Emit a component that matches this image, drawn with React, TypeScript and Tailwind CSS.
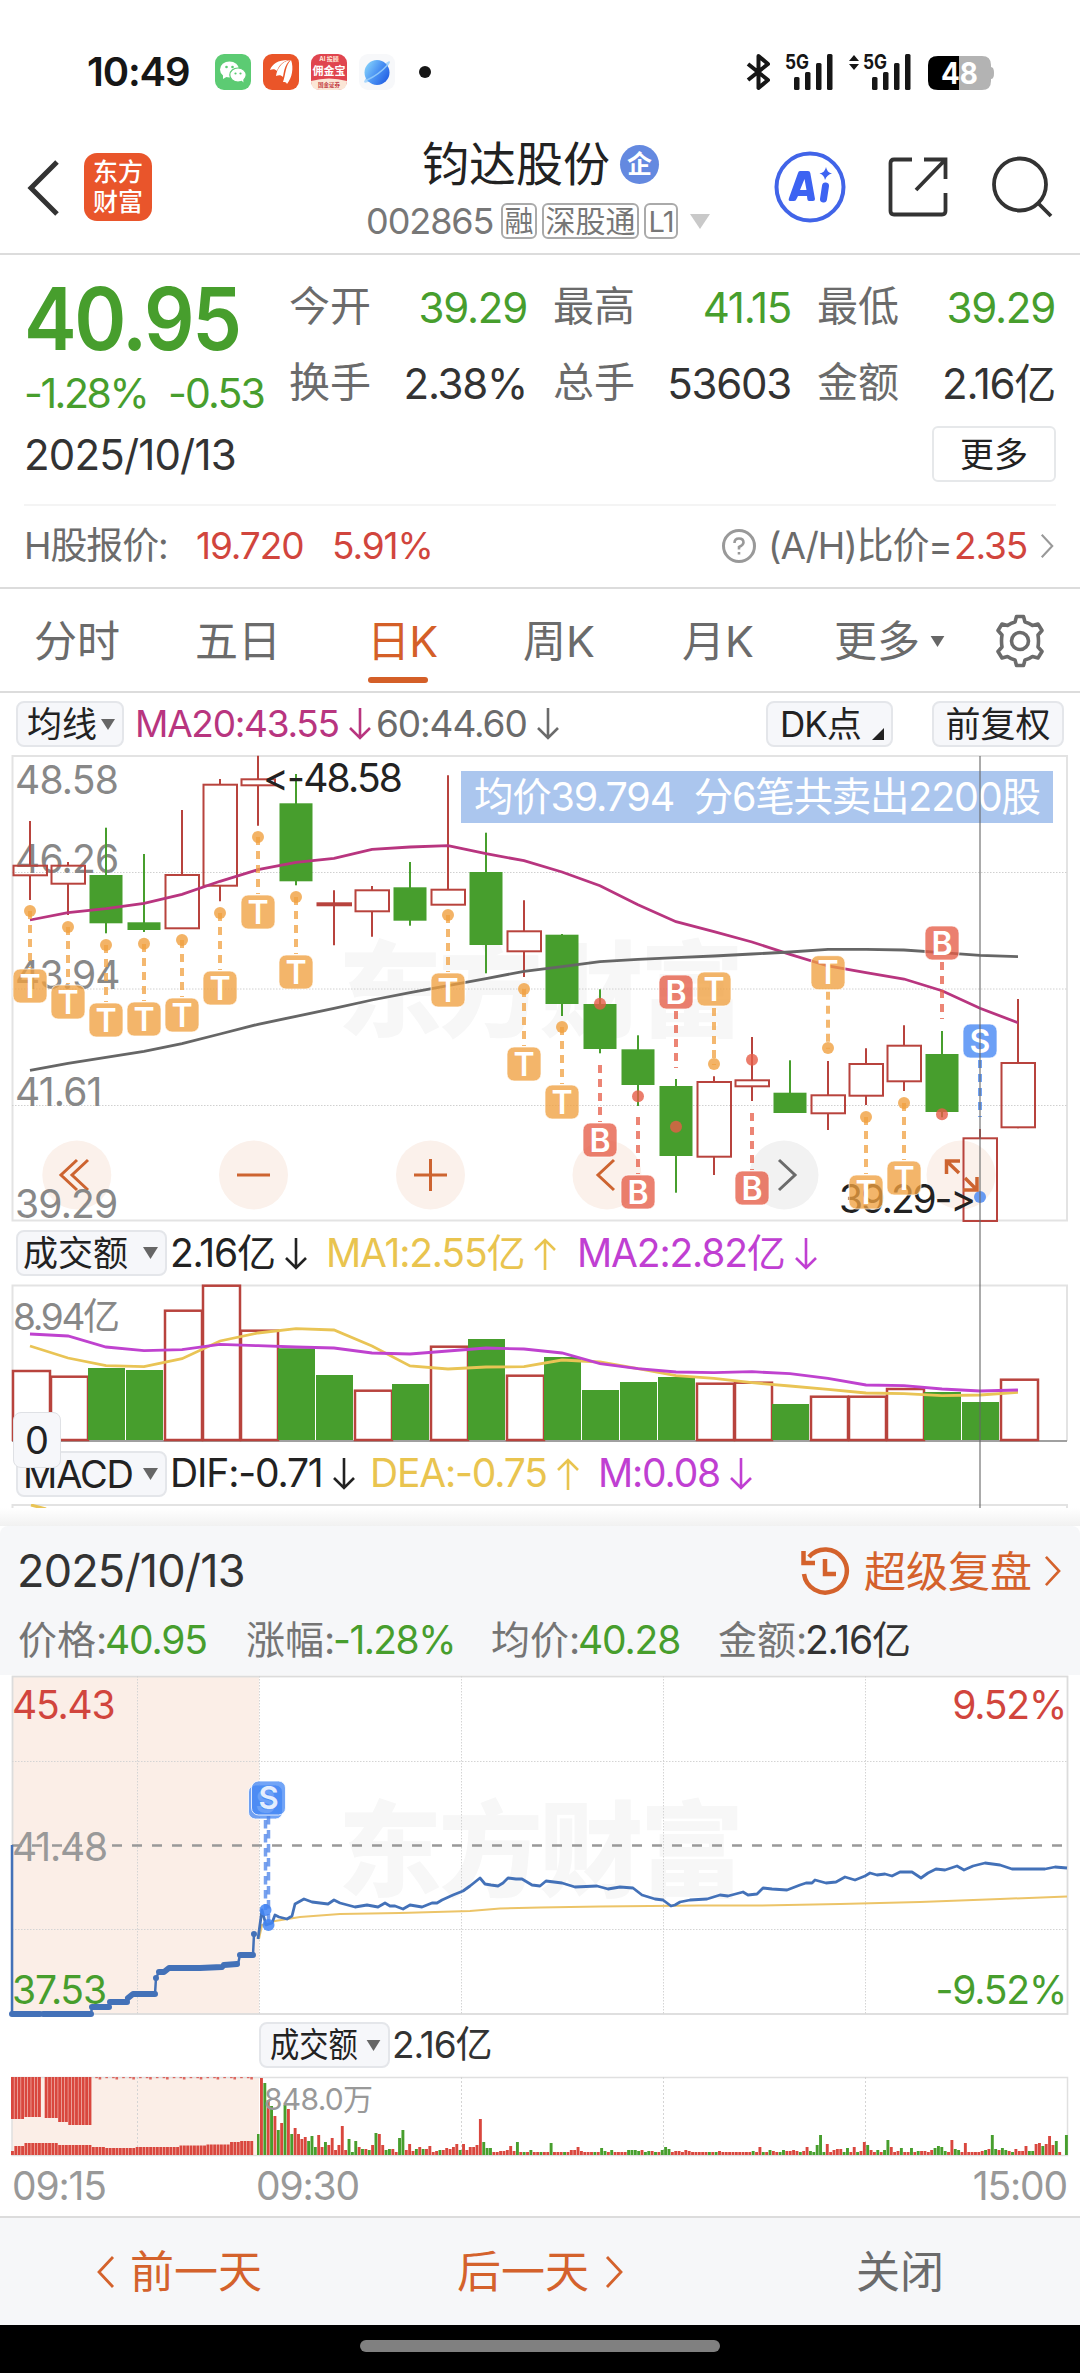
import type { ReactNode } from "react";

const UP = "#b8433d";
const DOWN = "#479e2d";

type Candle = [kind: "r" | "g", high: number, top: number, bottom: number, low: number];

const candles: Candle[] = [
  ["r", 821, 865.7, 875.3, 900],
  ["r", 862, 865.7, 883.7, 915],
  ["g", 827.7, 875, 923.3, 933.3],
  ["g", 854, 922.3, 930, 932],
  ["r", 810, 875, 928.3, 928.3],
  ["r", 779, 784.7, 885.7, 901.3],
  ["r", 755.7, 779.3, 785.3, 825.7],
  ["g", 774, 803.3, 881.3, 885.3],
  ["r", 890.3, 903.3, 905.3, 945.3],
  ["r", 886, 890.3, 911.3, 936.7],
  ["g", 862, 887.3, 920.7, 925.7],
  ["r", 775.3, 889.7, 904.7, 904.7],
  ["g", 832.7, 872, 945, 973.3],
  ["r", 900.3, 931.3, 951.3, 977],
  ["g", 934, 934.7, 1004, 1016],
  ["g", 989.3, 1004, 1049, 1053.3],
  ["g", 1035.3, 1049.3, 1085, 1106],
  ["g", 1079, 1086, 1156, 1192.7],
  ["r", 1076.3, 1082, 1156.7, 1175],
  ["r", 1037, 1080.3, 1086.3, 1101],
  ["g", 1060.3, 1092.7, 1113, 1113],
  ["r", 1061, 1095.3, 1113.3, 1130],
  ["r", 1048.3, 1064, 1095.7, 1105],
  ["r", 1025.3, 1045.7, 1081.3, 1091],
  ["g", 1031, 1054, 1112, 1117.3],
  ["r", 1129, 1138.3, 1221, 1221],
  ["r", 999, 1063, 1127.3, 1128.3],
];

const ma20 = [
  920, 912.7, 908.7, 903.3, 894.3, 881.3, 869.7, 862.3, 858.3, 849.3, 847, 845.7, 853.7, 860.7,
  872, 885.7, 904.7, 921.7, 931.7, 942, 954.3, 966, 972.7, 979, 990.7, 1008.3, 1022.7,
];
const ma60 = [
  1070.3, 1063.3, 1057.3, 1051.3, 1043.7, 1034, 1024.3, 1016.3, 1008.3, 1000, 992.7, 985.7, 978.7,
  971.3, 966.7, 961.7, 959.3, 957.7, 956, 954, 952, 949.3, 949.3, 950, 952.7, 955.3, 956.7,
];

type Mark = [index: number, label: "T" | "B" | "S", box: number, dot: number];

const marks: Mark[] = [
  [0, "T", 986, 911],
  [1, "T", 1002, 927],
  [2, "T", 1020, 945],
  [3, "T", 1019, 943.7],
  [4, "T", 1015, 940],
  [5, "T", 988, 913],
  [6, "T", 912, 837],
  [7, "T", 972, 897],
  [11, "T", 990, 915],
  [13, "T", 1064, 989],
  [14, "T", 1102, 1027],
  [15, "B", 1140, 1003.7],
  [16, "B", 1192, 1096.3],
  [17, "B", 992, 1126.7],
  [18, "T", 989, 1064],
  [19, "B", 1188, 1059.7],
  [21, "T", 972.7, 1048],
  [22, "T", 1192, 1117],
  [23, "T", 1178, 1103],
  [24, "B", 943, 1114.3],
  [25, "S", 1041, 1197],
];

const markFill = { T: "#f0a040", B: "#e65c47", S: "#4285f4" };

const volumes: [kind: "r" | "g", top: number][] = [
  ["r", 1371], ["r", 1376.7], ["g", 1368], ["g", 1370], ["r", 1310.7], ["r", 1285.7], ["r", 1330.7],
  ["g", 1348.3], ["g", 1375], ["r", 1390.7], ["g", 1384], ["r", 1346.7], ["g", 1339], ["r", 1375.7],
  ["g", 1357], ["g", 1390], ["g", 1382], ["g", 1377], ["r", 1383.7], ["r", 1382.7], ["g", 1404],
  ["r", 1396.7], ["r", 1396.7], ["r", 1389], ["g", 1392], ["g", 1402], ["r", 1379.7],
];
const volMa1 = [
  1346, 1358, 1365.7, 1366.7, 1358.7, 1341, 1333, 1328.7, 1330, 1346, 1366, 1369, 1367, 1366.7,
  1360, 1362, 1368.7, 1375.7, 1378.3, 1382.7, 1386, 1389.3, 1393, 1393.7, 1395.7, 1395, 1392.3,
];
const volMa2 = [
  1334, 1336, 1347, 1350.7, 1349.7, 1344.3, 1345.7, 1347, 1348, 1353, 1354, 1351, 1348, 1349,
  1353, 1363.7, 1368.7, 1372, 1372.7, 1371.7, 1373.7, 1378.3, 1385, 1385.7, 1389, 1391, 1390,
];

const auction =
  "12,1845 12,2014 91,2014 92,2007 109,2007 110,2002 127,2002 130,1997 133,1994 155,1994 156,1978 159,1972 163,1972 168,1968 222,1967 226,1965 238,1964 240,1955 253,1955 254,1934";
const auctionSteps = [
  "M12 2014H40", "M43 2014H91", "M92 2007H109", "M110 2002H127", "M128 1998L133 1994H155",
  "M156 1978V1978.1", "M159 1972H164L169 1968H200", "M200 1968L222 1967", "M224 1965L237 1964",
  "M240 1955H253", "M254 1934V1934.1",
];
const price =
  "258,1939 262,1910 266,1925 272,1923 275,1915 279,1917 283,1918 287,1919 292,1916 295,1904 304,1899 312,1902 320,1903 328,1904 334,1900 340,1903 355,1907 367,1905 378,1907 385,1903 390,1906 395,1906 403,1909 410,1905 422,1907 432,1903 437,1903 442,1900 453,1895 463,1891 470,1886 480,1878 485,1884 491,1885 498,1886 503,1883 508,1878 516,1879 522,1879 532,1885 540,1886 546,1881 562,1883 575,1887 597,1886 608,1889 620,1887 633,1888 642,1895 655,1899 663,1900 671,1906 675,1905 680,1902 690,1900 707,1899 720,1895 728,1896 743,1892 748,1895 757,1894 763,1888 772,1889 787,1890 800,1885 806,1883 812,1883 815,1880 826,1883 836,1882 845,1877 855,1880 865,1876 870,1873 877,1875 885,1874 892,1876 900,1872 912,1872 921,1878 928,1873 936,1869 945,1870 957,1866 964,1870 973,1866 985,1863 1000,1865 1012,1869 1030,1869 1045,1869 1055,1867 1067,1868";
const average =
  "259,1939 262,1925 275,1921 300,1917 340,1914 400,1913 470,1911 500,1908.5 540,1907.5 600,1906.5 700,1905.5 760,1905.5 840,1904 920,1902 1000,1899 1067,1896.5";

// one entry per minute, negative when the minute closed lower
const minutes = [
  77, -72, 55, -49, 39, -25, 32, -50, 46, -21, 27, 21, 16, 18, -14, -19, -8, 20, 8, -13, 10, 17, 5,
  10, 29, 5, -16, -3, -14, 8, -6, 6, -5, 10, -22, 21, 10, -5, -6, 6, 3, -17, -25, 5, 11, 4, -6, 8,
  -6, 6, 9, 3, 4, -5, 5, 7, 6, 8, 11, -5, 11, 5, 8, 8, 10, 36, -13, -7, -7, 3, 3, 4, 4, 5, 9, 4,
  -13, 3, -3, 3, -5, 3, 3, -3, 3, 3, -12, 3, 3, 3, -3, 3, 5, 5, 8, 4, 3, 3, 3, -3, 3, -7, -4, 3, -5,
  3, 3, 3, 3, -5, -5, -5, -4, 5, -3, -4, 4, -3, 3, -5, -8, -6, 3, 4, 4, 3, 5, 4, 3, 3, 3, 3, 3, -3,
  3, -3, 4, 3, 3, 3, 3, 3, 3, 3, 3, 3, -4, 3, 8, -3, 3, -5, 4, 3, -3, -5, 4, 4, 5, 4, -3, 4, 8, -4,
  -3, -10, -20, -3, 11, 3, 5, 6, 6, -3, -7, 3, 8, -3, 4, 13, -10, 5, 3, -5, 3, -5, -15, 8, 3, 4, -7,
  3, 3, -7, 3, -4, 4, 4, 3, 5, -7, -9, -8, -4, 3, 15, -6, -5, 3, 12, 3, 3, 3, 3, 4, -5, 6, -20, -6,
  5, -7, -5, 4, -3, 6, 4, 4, 9, -4, -4, 11, 12, -9, 11, 19, 10, -14, 3, 0, -20,
];

const auctionHeight = (x: number) => {
  if (x < 14) return 4;
  if (x < 25) return 9;
  if (x < 58) return 12;
  if (x < 91) return 10;
  if (x < 104) return 8;
  if (x < 135) return 7;
  if (x < 180) return 8;
  if (x < 205) return 9.5;
  if (x < 228) return 10.5;
  if (x < 240) return 13;
  return 14;
};
const auctionTop = (x: number) => (x < 24 ? 42 : x < 40 ? 40 : x < 58 ? 41 : x < 68 ? 45 : 48);

const cx = (i: number) => 30 + i * 38;
const line = (ys: number[]) => ys.map((y, i) => `${cx(i)},${y}`).join(" ");

function Triangle({ className }: { className?: string }) {
  return (
    <svg viewBox="0 0 15 12" className={className} fill="#666">
      <path d="M0 0H15L7.5 12Z" />
    </svg>
  );
}

function Chevron({ dir, className }: { dir: "left" | "right"; className?: string }) {
  return (
    <svg viewBox="0 0 18 32" className={className} fill="none" stroke="currentColor" strokeWidth="2.8">
      <path d={dir === "left" ? "M16 1L2 16L16 31" : "M2 1L16 16L2 31"} />
    </svg>
  );
}

function Num({ children, className = "" }: { children: ReactNode; className?: string }) {
  return <span className={`whitespace-nowrap tracking-[-0.03em] ${className}`}>{children}</span>;
}

function Arrow({ up }: { up?: boolean }) {
  return (
    <svg viewBox="0 0 22 32" className="ml-[10px] inline-block h-8 w-[22px] align-[-3px]" fill="none" stroke="currentColor" strokeWidth="2.6">
      <path d={up ? "M11 32V2M1 12L11 2L21 12" : "M11 0V30M1 20L11 30L21 20"} />
    </svg>
  );
}

function Watermark({ y }: { y: number }) {
  return (
    <text
      x="338"
      y={y}
      fontSize="104"
      fontWeight="900"
      fill="#f7f7f7"
      textLength="406"
      fontFamily="'Noto Sans CJK SC', sans-serif"
    >
      东方财富
    </text>
  );
}

function Signal() {
  return (
    <g fill="#161616">
      <rect x="8" y="23" width="5.500" height="13" rx="1.500" />
      <rect x="19" y="18" width="5.500" height="18" rx="1.500" />
      <rect x="30" y="9" width="5.500" height="27" rx="1.500" />
      <rect x="41" y="0" width="5.500" height="36" rx="1.500" />
      <text x="-1" y="15" fontSize="20" fontWeight="700" textLength="24" lengthAdjust="spacingAndGlyphs">
        5G
      </text>
    </g>
  );
}

function StatusBar() {
  return (
    <div className="flex h-[110px] items-end pb-[20px] pl-[87px]">
      <div className="flex h-9 items-center">
        <Num className="w-[128px] text-[40px] font-semibold leading-9 text-[#161616]">10:49</Num>
        <svg className="size-9" viewBox="0 0 36 36">
          <rect width="36" height="36" rx="9" fill="#5ccb73" />
          <ellipse cx="14.500" cy="15.500" rx="9.500" ry="8" fill="#fff" />
          <path d="M8 20L8 25L13 22Z" fill="#fff" />
          <ellipse cx="23" cy="21" rx="8.200" ry="7" fill="#fff" stroke="#5ccb73" strokeWidth="1.200" />
          <path d="M26 26L28.500 28.500L28 24Z" fill="#fff" />
          <g fill="#5ccb73">
            <circle cx="11.500" cy="13" r="1.300" />
            <circle cx="17.500" cy="13" r="1.300" />
            <circle cx="20.500" cy="19.500" r="1.100" />
            <circle cx="25.500" cy="19.500" r="1.100" />
          </g>
        </svg>
        <svg className="ml-3 size-9" viewBox="0 0 36 36" fill="#fff">
          <rect width="36" height="36" rx="9" fill="#ea5529" />
          <path d="M7 16C9 10 15 6 25 6C17 9 15 14 14 17C12 15 10 15 7 16Z" />
          <path d="M13 22C14 15 18 8 27 6C21 12 21 18 20 23C18 21 16 21 13 22Z" />
          <path d="M20 28C23 20 22 12 28 6C31 14 29 24 24 30C23 28 22 28 20 28Z" />
        </svg>
        <svg className="ml-3 size-9" viewBox="0 0 36 36">
          <rect width="36" height="36" rx="9" fill="#e0454f" />
          <path d="M0 27Q18 22 36 27V27Q36 36 27 36H9Q0 36 0 27Z" fill="#fbe6d6" />
          <text x="18" y="7" fontSize="6" textAnchor="middle" fill="#ffe9d9" fontWeight="700">AI 投顾</text>
          <text x="18" y="20.500" fontSize="11" textAnchor="middle" fill="#fff" fontWeight="700">佣金宝</text>
          <text x="18" y="33" fontSize="5.500" textAnchor="middle" fill="#c23a3f" fontWeight="700">国金证券</text>
        </svg>
        <svg className="ml-3 size-9" viewBox="0 0 36 36">
          <defs>
            <linearGradient id="planet" x1="0" y1="0.200" x2="1" y2="0.800">
              <stop offset="0" stopColor="#86d3fb" />
              <stop offset="0.500" stopColor="#4a92f3" />
              <stop offset="1" stopColor="#1f5be2" />
            </linearGradient>
          </defs>
          <rect width="36" height="36" rx="9" fill="#f7f8fa" />
          <path d="M27 9C32 5 33 8 26 15L11 27C5 30 3 29 8 23Z" fill="#a9d6fb" />
          <circle cx="18" cy="18.500" r="12.500" fill="url(#planet)" />
          <path d="M8 26C17 22 24 16 28.500 11" fill="none" stroke="#8cc6fa" strokeWidth="1.500" />
        </svg>
        <div className="ml-6 size-3 rounded-full bg-[#161616]" />
      </div>
      <svg className="ml-[315px] h-9 w-[250px] overflow-visible" viewBox="0 0 250 36">
        <path d="M2 10L22 26L12.500 34V2L22 10L2 26" fill="none" stroke="#161616" strokeWidth="4" strokeLinejoin="round" />
        <g transform="translate(40 0)">
          <Signal />
        </g>
        <path d="M103 7L108 1L113 7ZM103 10L108 16L113 10Z" fill="#161616" />
        <g transform="translate(118 0)">
          <Signal />
        </g>
        <path d="M192 2H213V36H192Q182 36 182 27V11Q182 2 192 2Z" fill="#000" />
        <path d="M213 2H236Q245 2 245 11V27Q245 36 236 36H213Z" fill="#b3b3b3" />
        <path d="M245 13Q248 13 248 19Q248 25 245 25Z" fill="#b3b3b3" />
        <text x="195" y="30" fontSize="30" fontWeight="700" fill="#fff" textLength="37" lengthAdjust="spacingAndGlyphs">
          48
        </text>
      </svg>
    </div>
  );
}

function Header() {
  return (
    <div className="flex h-[145px] border-b-2 border-[#dcdcdc]">
      <svg className="ml-[27px] mt-[50px] h-[56px] w-8" viewBox="0 0 32 56" fill="none" stroke="#333" strokeWidth="5">
        <path d="M30 2L4 28L30 54" />
      </svg>
      <div className="ml-[25px] mt-[43px] flex size-[68px] flex-col items-center justify-center rounded-[13px] bg-[#e9552b] text-[25px] font-medium leading-[30px] text-white">
        <span>东方</span>
        <span>财富</span>
      </div>
      <div className="ml-[214px] w-[351px]">
        <div className="mt-[29px] flex h-[50px] items-center pl-[56px]">
          <span className="w-[198px] text-[47px] leading-[50px] text-[#222]">钧达股份</span>
          <span className="flex size-[39px] items-center justify-center rounded-full bg-[#6489e0] text-[25px] font-bold leading-none text-white">
            企
          </span>
        </div>
        <div className="mt-[14px] flex h-9 items-center text-[#777]">
          <Num className="w-[135px] text-[36px] leading-9">002865</Num>
          <span className="mr-[5px] flex h-9 w-9 items-center justify-center rounded-md border-2 border-[#aaa] text-[29px] leading-none">
            融
          </span>
          <span className="mr-[5px] flex h-9 w-[97px] items-center justify-center rounded-md border-2 border-[#aaa] text-[30px] leading-none">
            深股通
          </span>
          <span className="flex h-9 w-[34px] items-center justify-center rounded-md border-2 border-[#aaa] text-[29px] leading-none">
            <Num>L1</Num>
          </span>
          <svg className="ml-3 h-[15px] w-5" viewBox="0 0 20 15" fill="#c9c9c9">
            <path d="M0 0H20L10 15Z" />
          </svg>
        </div>
      </div>
      <svg className="ml-[57px] mt-[41px] size-[72px]" viewBox="0 0 72 72">
        <circle cx="36" cy="36" r="33.500" fill="none" stroke="#4164e8" strokeWidth="4" />
        <path
          d="M26 20H34Q36 20 36.300 22L41 48Q41 50 39 50H35Q33.500 50 33.300 48L33 45H24L22.500 48Q22 50 20 50H16Q14 50 15 47L24 22Q24.500 20 26 20ZM30.500 28L26 39H32.500Z"
          fill="#3d63f2"
          fillRule="evenodd"
        />
        <path d="M51.500 35L49.500 48" stroke="#3d63f2" strokeWidth="7" strokeLinecap="round" />
        <path d="M52 16Q53 21.500 58 22.500Q53 23.500 51 29Q50 23.500 45.500 22.500Q51 21.500 52 16Z" fill="#3d63f2" />
      </svg>
      <svg className="ml-[42px] mt-[47px] size-[60px]" viewBox="0 0 60 60" fill="none" stroke="#333" strokeWidth="3.800">
        <path d="M24 2.500H6Q2.500 2.500 2.500 6V54Q2.500 57.500 6 57.500H54Q57.500 57.500 57.500 54V36" />
        <path d="M36 2.500H57.500V22M57 3L28 33" />
      </svg>
      <svg className="ml-[44px] mt-[46px] size-[62px]" viewBox="0 0 62 62" fill="none" stroke="#333" strokeWidth="3.800">
        <circle cx="28" cy="28.500" r="26" />
        <path d="M46 47L59 60" />
      </svg>
    </div>
  );
}

function Stat({ label, value, green }: { label: string; value: ReactNode; green?: boolean }) {
  return (
    <div className="flex h-[76px] w-[238px] items-center justify-between">
      <span className="text-[41px] text-[#6b6b6b]">{label}</span>
      <Num className={`text-[42px] ${green ? "text-[#479e2d]" : "text-[#333]"}`}>{value}</Num>
    </div>
  );
}

function Quote() {
  return (
    <div className="h-[334px] border-b-2 border-[#dcdcdc] px-6">
      <div className="flex h-[158px]">
        <div className="w-[265px] text-[#479e2d]">
          <div className="mt-[22px] h-[85px] origin-left scale-x-[0.92] whitespace-nowrap text-[86px] font-semibold leading-[85px] tracking-[-0.03em]">
            40.95
          </div>
          <div className="mt-[10px] flex h-[44px] items-center text-[41px]">
            <span className="w-[144px] whitespace-nowrap tracking-[-0.06em]">-1.28%</span>
            <span className="whitespace-nowrap tracking-[-0.045em]">-0.53</span>
          </div>
        </div>
        <div className="mt-[14px] grid grid-cols-3 gap-x-[26px]">
          <Stat label="今开" value="39.29" green />
          <Stat label="最高" value="41.15" green />
          <Stat label="最低" value="39.29" green />
          <Stat label="换手" value="2.38%" />
          <Stat label="总手" value="53603" />
          <Stat label="金额" value="2.16亿" />
        </div>
      </div>
      <div className="mt-[13px] flex h-[56px] items-center justify-between">
        <span className="text-[42px] tracking-[-0.02em] text-[#333]">2025/10/13</span>
        <span className="flex h-[56px] w-[124px] items-center justify-center rounded-md border-2 border-[#e6e8ea] text-[34px] text-[#222]">
          更多
        </span>
      </div>
      <div className="mt-[22px] flex h-[82px] items-center border-t-2 border-[#f4f4f4] text-[37px] text-[#6b6b6b]">
        <Num className="w-[172px]">H股报价:</Num>
        <Num className="w-[136px] text-[#d1453d]">19.720</Num>
        <Num className="w-[389px] text-[#d1453d]">5.91%</Num>
        <svg className="size-[36px]" viewBox="0 0 36 36" fill="none" stroke="#999">
          <circle cx="18" cy="18" r="15.500" strokeWidth="3" />
          <path d="M13.500 15Q13.500 10.500 18 10.500Q22.500 10.500 22.500 14.500Q22.500 17 18 19V21.500M18 24V26.500" strokeWidth="2.600" />
        </svg>
        <Num className="ml-[11px] w-[186px]">(A/H)比价=</Num>
        <Num className="w-[86px] text-[#d1453d]">2.35</Num>
        <Chevron dir="right" className="h-[24px] w-[14px] text-[#999]" />
      </div>
    </div>
  );
}

function Tabs() {
  return (
    <div className="flex h-[104px] items-center border-b-2 border-[#dcdcdc] pl-[34px] pt-[2px] text-[43px] text-[#6b6b6b]">
      <span className="w-[161px]">分时</span>
      <span className="w-[172px]">五日</span>
      <span className="relative w-[156px] tracking-[-0.02em] text-[#d45f28]">
        日K
        <span className="absolute -bottom-[10px] left-[1px] h-[6px] w-[60px] rounded-full bg-[#d45f28]" />
      </span>
      <span className="w-[159px]">周K</span>
      <span className="w-[152px]">月K</span>
      <span className="w-[96px]">更多</span>
      <Triangle className="h-[11px] w-[15px]" />
      <svg className="ml-[48px] size-[54px]" viewBox="0 0 54 54" fill="none" stroke="#6b6b6b" strokeWidth="3.600">
        <path
          d="M22 8L23.500 2.500H30.500L32 8Q36 9 39.500 11.500L45 10L49 16.500L45 21Q46 27 45 33L49 37.500L45 44L39.500 42.500Q36 45 32 46L30.500 51.500H23.500L22 46Q18 45 14.500 42.500L9 44L5 37.500L9 33Q8 27 9 21L5 16.500L9 10L14.500 11.500Q18 9 22 8Z"
          strokeLinejoin="round"
        />
        <circle cx="27" cy="27" r="8.500" />
      </svg>
    </div>
  );
}

function Pill({ children, className = "" }: { children: ReactNode; className?: string }) {
  return (
    <span
      className={`flex h-[46px] items-center whitespace-nowrap rounded-lg border-2 border-[#e4e6ea] bg-[#f6f7fa] text-[35px] leading-none text-[#222] ${className}`}
    >
      {children}
    </span>
  );
}

function KChart() {
  return (
    <svg className="block h-[467px] w-[1080px] overflow-visible" viewBox="0 755 1080 467">
      <Watermark y={1029} />
      <rect x="12.500" y="756" width="1054.500" height="464.500" fill="none" stroke="#e3e3e3" strokeWidth="2" />
      {[872.500, 989, 1105.500].map((y) => (
        <path key={y} d={`M12 ${y}H1067`} stroke="#d0d0d0" strokeDasharray="1.500 1.500" />
      ))}

      {[76.800, 253.500, 430.500, 607, 961].map((x) => (
        <circle key={x} cx={x} cy="1175" r="34.500" fill="#fbf1eb" />
      ))}
      <circle cx="784" cy="1175" r="34.500" fill="#f2f2f2" />
      <g fill="none" stroke="#cd6430" strokeWidth="3">
        <path d="M77 1160L61 1175L77 1190M88 1160L72 1175L88 1190" />
        <path d="M237 1175H270" />
        <path d="M414 1175H447M430.500 1159V1191" />
        <path d="M614 1160L598 1175L614 1190" />
        <path d="M779 1160L795 1175L779 1190" stroke="#6b6b6b" />
      </g>

      <g fontSize="39" fill="#888">
        {(
          [
            ["48.58", 794],
            ["46.26", 873],
            ["43.94", 989],
            ["41.61", 1106],
            ["39.29", 1218],
          ] as [string, number][]
        ).map(([label, y]) => (
          <text key={label} x="15" y={y} letterSpacing="-0.8">
            {label}
          </text>
        ))}
      </g>

      {candles.map(([kind, high, top, bottom, low], i) =>
        kind === "g" ? (
          <g key={i} fill={DOWN}>
            <rect x={cx(i) - 1} y={high} width="2" height={low - high} />
            <rect x={cx(i) - 16.500} y={top} width="33" height={bottom - top} />
          </g>
        ) : (
          <g key={i} fill="none" stroke={UP} strokeWidth="2">
            <path d={`M${cx(i)} ${high}V${top}M${cx(i)} ${bottom}V${low}`} />
            <rect x={cx(i) - 16.500} y={top} width="33.500" height={bottom - top} />
          </g>
        ),
      )}

      <polyline points={line(ma20)} fill="none" stroke="#b8357f" strokeWidth="2.800" />
      <polyline points={line(ma60)} fill="none" stroke="#666" strokeWidth="2.800" />

      <g className="[font-feature-settings:'calt'_0]" fontSize="39" fill="#222">
        <text x="263" y="792" textLength="140">
          &lt;-48.58
        </text>
        <text x="839" y="1213" textLength="137">
          39.29-&gt;
        </text>
      </g>

      {marks.map(([i, label, box, dot]) => {
        const from = dot > box ? box + 19 : box - 75;
        return (
          <g key={`${label}${i}`} fill={markFill[label]}>
            <path
              d={`M${cx(i)} ${from}V${from + 57}`}
              stroke={markFill[label]}
              strokeOpacity="0.75"
              strokeWidth="4"
              strokeDasharray="8 6"
            />
            <circle cx={cx(i)} cy={dot} r="6" fillOpacity="0.8" />
            <rect x={cx(i) - 17} y={box - 17} width="34" height="34" rx="7" fillOpacity="0.78" stroke="#fff" strokeOpacity="0.7" />
            <text x={cx(i)} y={box + 11.500} fontSize="32" fontWeight="600" textAnchor="middle" fill="#fff">
              {label}
            </text>
          </g>
        );
      })}

      <g fill="none" stroke="#cd6430" strokeWidth="3.500">
        <path d="M946.500 1174V1161H960M947 1161.500L959 1173" />
        <path d="M977 1177V1190H963M976.500 1189.500L965 1178" />
      </g>

      <rect x="461" y="771" width="592" height="52" fill="#abc6ee" />
      <text x="474" y="811" fontSize="39.500" fill="#fff" textLength="567">
        {"均价39.794\u00a0 分6笔共卖出2200股"}
      </text>
    </svg>
  );
}

function VolumeChart() {
  return (
    <svg className="block h-[159px] w-[1080px]" viewBox="0 1284 1080 159">
      <path d="M12.500 1441V1285.500H1067V1441" fill="none" stroke="#e3e3e3" strokeWidth="2" />
      <path d="M12 1441H1067" stroke="#a0a0a0" strokeWidth="2" />
      <text x="13" y="1330" fontSize="37" fill="#888" textLength="107">
        8.94亿
      </text>
      {volumes.map(([kind, top], i) =>
        kind === "g" ? (
          <rect key={i} x={12 + i * 38} y={top} width="37" height={1440 - top} fill={DOWN} />
        ) : (
          <rect
            key={i}
            x={13 + i * 38}
            y={top}
            width="37"
            height={1440 - top}
            fill="none"
            stroke={UP}
            strokeWidth="2.500"
          />
        ),
      )}
      <polyline points={line(volMa1)} fill="none" stroke="#e9c455" strokeWidth="2.800" />
      <polyline points={line(volMa2)} fill="none" stroke="#bf42cf" strokeWidth="2.800" />
    </svg>
  );
}

function DailyPanel() {
  return (
    <div className="relative">
      <div className="flex h-[62px] items-center pl-4 text-[37px]">
        <Pill className="w-[108px] pl-[9px]">
          均线
          <Triangle className="ml-[4px] h-[13px] w-[14px]" />
        </Pill>
        <Num className="ml-[11px] w-[241px] tracking-[-0.035em] text-[#b8357f]">
          MA20:43.55
          <Arrow />
        </Num>
        <Num className="w-[390px] text-[#6b6b6b]">
          60:44.60
          <Arrow />
        </Num>
        <Pill className="w-[127px] pl-[12px]">
          <Num>DK点</Num>
          <svg className="ml-[11px] mt-[20px] size-3" viewBox="0 0 12 12">
            <path d="M12 0V12H0Z" fill="#222" />
          </svg>
        </Pill>
        <Pill className="ml-[39px] w-[132px] justify-center">前复权</Pill>
      </div>
      <KChart />
      <div className="flex h-[62px] items-center pl-4 text-[39px]">
        <Pill className="w-[151px] pl-[5px]">
          成交额
          <Triangle className="ml-[15px] h-[12px] w-[15px]" />
        </Pill>
        <Num className="ml-[3px] w-[156px] text-[#222]">
          2.16亿
          <Arrow />
        </Num>
        <Num className="w-[251px] text-[#e9c44f]">
          MA1:2.55亿
          <Arrow up />
        </Num>
        <Num className="text-[#c03fd2]">
          MA2:2.82亿
          <Arrow />
        </Num>
      </div>
      <VolumeChart />
      <div className="flex h-[61px] items-center pl-4 text-[39px]">
        <Pill className="w-[151px] pl-[5px]">
          <Num className="w-[120px] text-[38px]">MACD</Num>
          <Triangle className="h-[12px] w-[15px]" />
        </Pill>
        <Num className="ml-[3px] w-[200px] text-[#222]">
          DIF:-0.71
          <Arrow />
        </Num>
        <Num className="w-[228px] text-[#e9c44f]">
          DEA:-0.75
          <Arrow up />
        </Num>
        <Num className="text-[#c03fd2]">
          M:0.08
          <Arrow />
        </Num>
      </div>
      <svg className="block h-1 w-[1080px]" viewBox="0 1504 1080 4">
        <path d="M12.500 1508V1505H1067V1508" fill="none" stroke="#e3e3e3" strokeWidth="2" />
        <path d="M31 1505L46 1509" stroke="#e9c455" strokeWidth="3" />
      </svg>
      <div className="absolute left-[13px] top-[719px] flex h-[56px] w-[48px] items-center justify-center rounded-lg border border-[#dfe1e5] bg-[#f6f7fa] text-[38px] text-[#222]">
        0
      </div>
      <div className="absolute bottom-0 left-[979px] top-[63px] w-[2px] bg-[#666]/55" />
    </div>
  );
}

function Metric({ label, value, className }: { label: string; value: string; className: string }) {
  return (
    <div className="flex items-center whitespace-nowrap">
      <span className="w-[87px] text-[#757575]">{label}:</span>
      <Num className={className}>{value}</Num>
    </div>
  );
}

function IntradayHeader() {
  return (
    <div className="h-[149px] rounded-t-lg bg-[#f6f7f9]">
      <div className="flex h-[90px] items-center pl-[17px] text-[#333]">
        <span className="w-[783px] text-[45px] tracking-[-0.018em]">2025/10/13</span>
        <svg className="size-[50px]" viewBox="0 0 50 50" fill="none" stroke="#d4622c" strokeWidth="4.500">
          <path d="M4 28A21.500 21.500 0 1 0 9 11" />
          <path d="M3.500 5V17H15" />
          <path d="M25 13V28H36" />
        </svg>
        <span className="ml-[14px] w-[180px] text-[42px] text-[#d4622c]">超级复盘</span>
        <Chevron dir="right" className="h-[30px] w-[17px] text-[#d4622c]" />
      </div>
      <div className="-mt-[2px] flex h-[52px] items-center pl-[18px] text-[39px]">
        <div className="w-[228px]">
          <Metric label="价格" value="40.95" className="text-[#479e2d]" />
        </div>
        <div className="w-[245px]">
          <Metric label="涨幅" value="-1.28%" className="tracking-[-0.04em] text-[#479e2d]" />
        </div>
        <div className="w-[227px]">
          <Metric label="均价" value="40.28" className="text-[#479e2d]" />
        </div>
        <Metric label="金额" value="2.16亿" className="text-[#333]" />
      </div>
    </div>
  );
}

function SellMark({ x, y, dot }: { x: number; y: number; dot: number }) {
  return (
    <g fill="#4285f4">
      <path d={`M${x} ${y + 18}V${dot}`} stroke="#4a82e8" strokeOpacity="0.75" strokeWidth="3.500" strokeDasharray="8.500 5.500" />
      <circle cx={x} cy={dot} r="6" fillOpacity="0.85" />
      <rect x={x - 17} y={y - 17} width="34" height="34" rx="7" fillOpacity="0.75" stroke="#fff" strokeOpacity="0.8" />
      <text x={x} y={y + 11} fontSize="31" fontWeight="600" textAnchor="middle" fill="#fff" fillOpacity="0.85">
        S
      </text>
    </g>
  );
}

function IntradayChart() {
  return (
    <svg className="block h-[344px] w-[1080px]" viewBox="0 1675 1080 344">
      <rect x="12" y="1676" width="247" height="338" fill="#fbeee7" />
      <Watermark y={1889} />
      <rect x="12.500" y="1676.500" width="1055" height="337.500" fill="none" stroke="#dcdcdc" strokeWidth="1.800" />
      <g stroke="#d4d4d4" strokeDasharray="1.500 1.500">
        {[137.500, 259.500, 461.500, 663.500, 865.500].map((x) => (
          <path key={x} d={`M${x} 1676V2014`} />
        ))}
        <path d="M12 1761.500H1067M12 1929.500H1067" />
      </g>
      <path d="M12 1845.500H1067" stroke="#999" strokeWidth="2.500" strokeDasharray="10 10" />
      <g fontSize="39" letterSpacing="-1.2">
        <text x="12" y="1719" fill="#d1453d">45.43</text>
        <text x="12" y="1861" fill="#999">41.48</text>
        <text x="12" y="2004" fill="#479e2d">37.53</text>
        <text x="1066" y="1719" fill="#d1453d" textAnchor="end">9.52%</text>
        <text x="1066" y="2004" fill="#479e2d" textAnchor="end">-9.52%</text>
      </g>
      <polyline points={average} fill="none" stroke="#ecc468" strokeWidth="2" />
      <g fill="none" stroke="#4371b8" strokeLinejoin="round">
        <polyline points={auction} strokeWidth="2.500" />
        <path d={auctionSteps.join("")} strokeWidth="6" strokeLinecap="round" />
        <polyline points={price} strokeWidth="2.800" />
      </g>
      <SellMark x={265.500} y={1802} dot={1910} />
      <SellMark x={268.500} y={1798} dot={1925} />
    </svg>
  );
}

function IntradayVolume() {
  const slots = Array.from({ length: 72 }, (_, i) => 12 + i * 3.37);
  return (
    <svg className="block h-[81px] w-[1080px]" viewBox="0 2076 1080 81">
      <rect x="12" y="2077" width="247" height="78" fill="#fbeee7" />
      <rect x="12" y="2077.500" width="1055.500" height="78" fill="none" stroke="#e0e0e0" strokeWidth="1.500" />
      <g stroke="#d4d4d4" strokeDasharray="2 2">
        {[137.500, 461.500, 663.500, 865.500].map((x) => (
          <path key={x} d={`M${x} 2077V2155`} />
        ))}
      </g>
      <g fill="#d9473e">
        {slots.map((x, i) => (
          <rect key={x} x={x - 1} y={2155 - auctionHeight(x)} width="2.900" height={auctionHeight(x)} />
        ))}
        {slots
          .filter((x, i) => i < 24 && i !== 9)
          .map((x) => (
            <rect key={x} x={x - 1} y="2077" width="2.900" height={auctionTop(x)} />
          ))}
        {slots
          .filter((x, i) => i > 24 && (i * 7) % 5 < 3)
          .map((x, i) => (
            <rect key={x} x={x - 1} y="2077" width="2.600" height={i % 3 === 1 ? 2.500 : 1.200} opacity="0.8" />
          ))}
      </g>
      <rect x="257" y="2134" width="2.500" height="21" fill={DOWN} />
      {minutes.map((v, i) => (
        <rect
          key={i}
          x={260 + i * 3.368}
          y={2155 - Math.abs(v)}
          width="2.900"
          height={Math.abs(v)}
          fill={v < 0 ? DOWN : "#d9473e"}
        />
      ))}
      <text x="264" y="2110" fontSize="30" fill="#999" textLength="109">
        848.0万
      </text>
    </svg>
  );
}

function Footer() {
  return (
    <div>
      <div className="flex h-[109px] items-center border-t-2 border-[#dcdcdc] bg-[#f6f7f9] pl-[97px] text-[44px] text-[#d4622c]">
        <Chevron dir="left" className="h-[32px] w-[18px]" />
        <span className="ml-[15px] w-[327px]">前一天</span>
        <span className="w-[148px]">后一天</span>
        <Chevron dir="right" className="h-[32px] w-[18px]" />
        <span className="ml-[233px] text-[#6b6b6b]">关闭</span>
      </div>
      <div className="flex h-[49px] justify-center bg-black pt-[15px]">
        <div className="h-3 w-[360px] rounded-full bg-[#808080]" />
      </div>
    </div>
  );
}

export default function App() {
  return (
    <div className="h-[2373px] w-[1080px] overflow-hidden bg-white font-[Inter,'Noto_Sans_CJK_SC',sans-serif]">
      <StatusBar />
      <Header />
      <Quote />
      <Tabs />
      <DailyPanel />
      <div className="h-[18px] bg-gradient-to-b from-white to-[#f1f1f1]" />
      <IntradayHeader />
      <IntradayChart />
      <div className="flex h-[57px] items-center pb-[5px] pl-[259px] text-[37px] text-[#333]">
        <Pill className="w-[131px] pl-[9px]">
          <span className="w-[96px] origin-left scale-x-[0.86] text-[34px]">成交额</span>
          <Triangle className="h-[11px] w-[15px]" />
        </Pill>
        <Num className="ml-[2px]">2.16亿</Num>
      </div>
      <IntradayVolume />
      <div className="flex h-[59px] items-center justify-between pl-3 pr-[13px] text-[39px] text-[#999]">
        <Num className="w-[244px]">09:15</Num>
        <Num className="flex-1">09:30</Num>
        <Num>15:00</Num>
      </div>
      <Footer />
    </div>
  );
}
